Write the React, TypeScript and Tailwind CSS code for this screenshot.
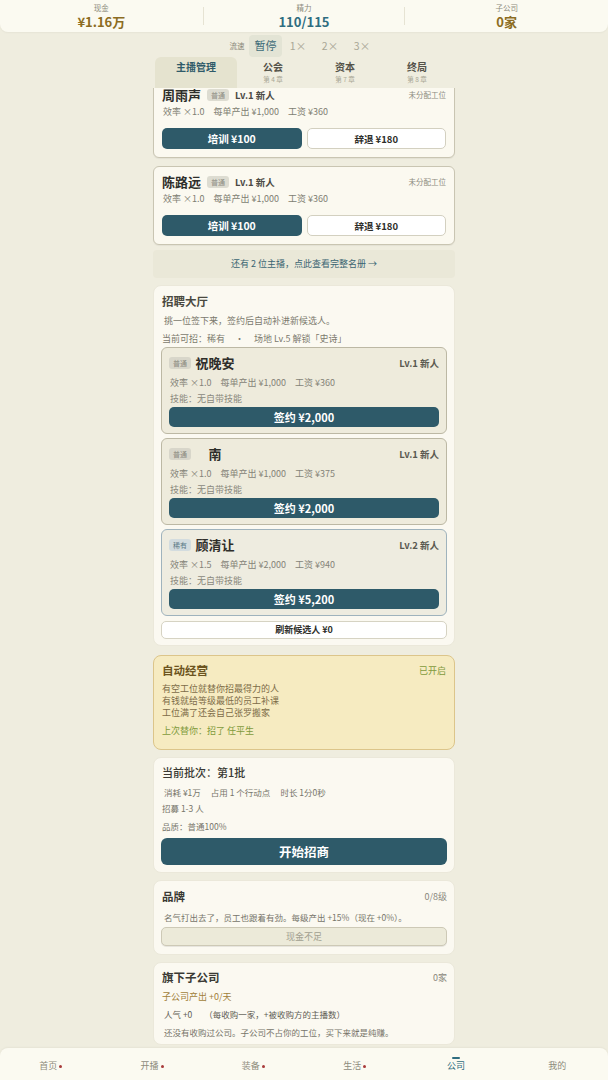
import React from "react";

const staff = [
  { name: "周雨声", salary: "¥360" },
  { name: "陈路远", salary: "¥360" },
];

const candidates = [
  { name: "祝晚安", tier: "普通", lv: "Lv.1 新人", eff: "×1.0", out: "¥1,000", pay: "¥360", price: "¥2,000", rare: false },
  { name: "南", tier: "普通", lv: "Lv.1 新人", eff: "×1.0", out: "¥1,000", pay: "¥375", price: "¥2,000", rare: false },
  { name: "顾清让", tier: "稀有", lv: "Lv.2 新人", eff: "×1.5", out: "¥2,000", pay: "¥940", price: "¥5,200", rare: true },
];

const navItems = [
  { label: "首页", dot: true },
  { label: "开播", dot: true },
  { label: "装备", dot: true },
  { label: "生活", dot: true },
  { label: "公司", dot: false, active: true },
  { label: "我的", dot: false },
];

function Stat({ label, value, color }: { label: string; value: string; color: string }) {
  return (
    <div className="flex flex-col items-center justify-center">
      <span className="text-[7.5px] leading-[10px] text-[#8d8b7c]">{label}</span>
      <span className={`text-[13px] leading-[17px] font-bold ${color}`}>{value}</span>
    </div>
  );
}

function StaffCard({ name, salary }: { name: string; salary: string }) {
  return (
    <div className="rounded-[6px] border border-[#c9c5b2] bg-[#fbf9f0] px-2 pt-[6px] pb-2 shadow-[0_1px_1px_rgba(0,0,0,0.05)]">
      <div className="flex h-[18px] items-center justify-between">
        <div className="flex items-center gap-[6px]">
          <span className="text-[13px] leading-[18px] font-bold text-[#2e2e2a]">{name}</span>
          <span className="rounded-[3px] bg-[#dddcd1] px-[4px] text-[7px] leading-[12px] text-[#8e8d84]">普通</span>
          <span className="text-[9.5px] leading-[14px] font-bold text-[#4b4a44]">Lv.1 新人</span>
        </div>
        <span className="text-[7.5px] leading-[10px] text-[#8d8b7f]">未分配工位</span>
      </div>
      <div className="mt-px flex h-[14px] items-center gap-[9px] pl-px text-[9px] leading-[14px] text-[#807e72]">
        <span>效率 ×1.0</span>
        <span>每单产出 ¥1,000</span>
        <span>工资 {salary}</span>
      </div>
      <div className="mt-[9px] grid grid-cols-2 gap-[5px]">
        <button className="h-[21px] rounded-[5px] bg-[#2e5a69] text-[10.5px] leading-[14px] font-bold text-white">培训 ¥100</button>
        <button className="h-[21px] rounded-[5px] border border-[#d3d0c0] bg-white text-[9.5px] leading-[14px] font-bold text-[#2e2e2a]">辞退 ¥180</button>
      </div>
    </div>
  );
}

function CandidateCard(c: (typeof candidates)[number]) {
  return (
    <div
      className={
        c.rare
          ? "rounded-[6px] border border-[#9fb3bd] bg-[#eeece0] px-[7px] pt-[6px] pb-[6px]"
          : "rounded-[6px] border border-[#bcb8a4] bg-[#eeebdc] px-[7px] pt-[6px] pb-[6px]"
      }
    >
      <div className="flex h-[18px] items-center justify-between">
        <div className="flex items-center gap-[4px]">
          <span
            className={
              c.rare
                ? "rounded-[3px] bg-[#d3dcdf] px-[4px] text-[7px] leading-[12px] text-[#5b7a86]"
                : "rounded-[3px] bg-[#d8d6ca] px-[4px] text-[7px] leading-[12px] text-[#8b8a80]"
            }
          >
            {c.tier}
          </span>
          <span className="min-w-[40px] text-center text-[13px] leading-[18px] font-bold text-[#2e2e2a]">{c.name}</span>
        </div>
        <span className="text-[9.5px] leading-[14px] font-bold text-[#5a5950]">{c.lv}</span>
      </div>
      <div className="mt-[4px] flex h-[13px] items-center gap-[9px] pl-[1px] text-[9px] leading-[13px] text-[#858378]">
        <span>效率 {c.eff}</span>
        <span>每单产出 {c.out}</span>
        <span>工资 {c.pay}</span>
      </div>
      <div className="mt-[3px] h-[13px] pl-[1px] text-[9px] leading-[13px] text-[#8a887c]">技能：无自带技能</div>
      <button className="mt-[2px] block h-[20px] w-full rounded-[5px] bg-[#2e5a69] text-[11px] leading-[14px] font-bold text-white">
        签约 {c.price}
      </button>
    </div>
  );
}

export default function App() {
  return (
    <div className="flex h-[1080px] w-[608px] flex-col overflow-hidden bg-[#efeddf] font-['Noto_Sans_CJK_SC','Noto_Sans',sans-serif]">
      {/* 顶部资源栏 */}
      <div className="grid h-[32px] shrink-0 grid-cols-3 rounded-b-[8px] bg-[#fbfaf1] shadow-[0_1px_2px_rgba(0,0,0,0.04)]">
        <Stat label="现金" value="¥1.16万" color="text-[#8c6c22]" />
        <div className="my-[7px] flex items-center justify-center border-x border-[#e6e3d3]">
          <div className="-my-[7px] flex flex-col items-center">
            <span className="text-[7.5px] leading-[10px] text-[#8d8b7c]">精力</span>
            <span className="text-[13px] leading-[17px] font-bold text-[#2f6d80]">110/115</span>
          </div>
        </div>
        <Stat label="子公司" value="0家" color="text-[#8c6c22]" />
      </div>

      {/* 流速 */}
      <div className="mt-[2px] flex h-[23px] shrink-0 items-center pl-[229px]">
        <span className="mr-[4px] w-[16px] text-center text-[7.5px] text-[#8d8b7c]">流速</span>
        <span className="flex h-[22px] w-[33px] items-center justify-center rounded-[4px] bg-[#e3e4d5] text-[11px] text-[#3d6b78]">暂停</span>
        <span className="w-[32px] text-center text-[10.5px] text-[#a9a796]">1×</span>
        <span className="w-[32px] text-center text-[10.5px] text-[#a9a796]">2×</span>
        <span className="w-[32px] text-center text-[10.5px] text-[#a9a796]">3×</span>
      </div>

      {/* 章节标签 */}
      <div className="flex h-[31px] shrink-0 justify-center">
        <div className="flex w-[302px] pl-[2px]">
          <div className="flex w-[82px] flex-col items-center rounded-t-[6px] bg-[#e5e3cf] pt-[3px]">
            <span className="text-[10px] leading-[14px] font-bold text-[#2f5a69]">主播管理</span>
          </div>
          {[
            ["公会", "第 4 章"],
            ["资本", "第 7 章"],
            ["终局", "第 8 章"],
          ].map(([t, s]) => (
            <div key={t} className="flex w-[72px] flex-col items-center pt-[3px]">
              <span className="text-[10px] leading-[14px] font-bold text-[#55534a]">{t}</span>
              <span className="text-[6.5px] leading-[10px] text-[#a8a694]">{s}</span>
            </div>
          ))}
        </div>
      </div>

      {/* 滚动内容 */}
      <div className="flex-1 overflow-hidden">
        <div className="mx-auto -mt-[9px] flex w-[302px] flex-col">
          <div className="flex flex-col gap-[8px]">
            {staff.map((s) => (
              <StaffCard key={s.name} {...s} />
            ))}
          </div>

          <div className="mt-[5px] flex h-[28px] items-center justify-center rounded-[4px] bg-[#eae8d8] text-[9px] text-[#3a6572]">
            还有 2 位主播，点此查看完整名册 →
          </div>

          {/* 招聘大厅 */}
          <div className="mt-[7px] rounded-[8px] border border-[#ebe8da] bg-[#fbf9f1] px-[7px] pt-[7px] pb-[6px]">
            <div className="h-[16px] pl-[1px] text-[11.5px] leading-[16px] font-bold text-[#4a4940]">招聘大厅</div>
            <div className="mt-[5px] h-[14px] pl-[3px] text-[9px] leading-[14px] text-[#7c7a6e]">挑一位签下来，签约后自动补进新候选人。</div>
            <div className="mt-[4px] flex h-[14px] items-center pl-px text-[9px] leading-[14px] text-[#7c7a6e]">
              <span>当前可招：稀有</span>
              <span className="mx-[10px]">·</span>
              <span>场地 Lv.5 解锁「史诗」</span>
            </div>
            <div className="mt-px flex flex-col gap-[4px]">
              {candidates.map((c) => (
                <CandidateCard key={c.name} {...c} />
              ))}
            </div>
            <button className="mt-[5px] block h-[18px] w-full rounded-[5px] border border-[#d6d3c3] bg-white text-[9px] leading-[12px] font-bold text-[#2e2e2a]">
              刷新候选人 ¥0
            </button>
          </div>

          {/* 自动经营 */}
          <div className="mt-[9px] rounded-[8px] border border-[#dcc58a] bg-[#f6ebc1] px-[8px] pt-[6px] pb-[12px]">
            <div className="flex h-[17px] items-center justify-between">
              <span className="text-[11.5px] leading-[17px] font-bold text-[#6c5420]">自动经营</span>
              <span className="text-[9px] leading-[12px] text-[#7f9a3c]">已开启</span>
            </div>
            <div className="mt-[4px] flex flex-col text-[9px] leading-[12px] text-[#7d6c48]">
              <span>有空工位就替你招最得力的人</span>
              <span>有钱就给等级最低的员工补课</span>
              <span>工位满了还会自己张罗搬家</span>
            </div>
            <div className="mt-[6px] h-[12px] text-[9px] leading-[12px] text-[#7f9a3c]">上次替你：招了 任平生</div>
          </div>

          {/* 当前批次 */}
          <div className="mt-[7px] rounded-[8px] border border-[#ebe8da] bg-[#fbf9f1] px-[7px] pt-[6px] pb-[7px]">
            <div className="h-[17px] pl-[1px] text-[11px] leading-[17px] font-medium text-[#3a3934]">当前批次：第1批</div>
            <div className="mt-[5px] flex h-[12px] items-center gap-[10px] pl-[3px] text-[8.5px] leading-[12px] text-[#77756a]">
              <span>消耗 ¥1万</span>
              <span>占用 1 个行动点</span>
              <span>时长 1分0秒</span>
            </div>
            <div className="mt-[4px] h-[12px] pl-px text-[8.5px] leading-[12px] text-[#77756a]">招募 1-3 人</div>
            <div className="mt-[6px] h-[12px] pl-px text-[8.5px] leading-[12px] text-[#77756a]">品质：普通100%</div>
            <button className="mt-[6px] block h-[27px] w-full rounded-[6px] bg-[#2e5a69] text-[12.5px] leading-[17px] font-bold text-white">开始招商</button>
          </div>

          {/* 品牌 */}
          <div className="mt-[7px] rounded-[8px] border border-[#ebe8da] bg-[#fbf9f1] px-[7px] pt-[7px] pb-[8px]">
            <div className="flex h-[17px] items-center justify-between pl-px">
              <span className="text-[11.5px] leading-[17px] font-bold text-[#3a3934]">品牌</span>
              <span className="text-[9px] leading-[12px] text-[#8a887c]">0/8级</span>
            </div>
            <div className="mt-[6px] h-[12px] pl-[3px] text-[8.5px] leading-[12px] text-[#77756a]">
              名气打出去了，员工也跟着有劲。每级产出 +15%（现在 +0%）。
            </div>
            <button className="mt-[4px] block h-[19px] w-full rounded-[5px] border border-[#cdc9b6] bg-[#ecead9] text-[9px] leading-[12px] text-[#a19f90] shadow-[0_1px_0_rgba(0,0,0,0.08)]">
              现金不足
            </button>
          </div>

          {/* 旗下子公司 */}
          <div className="mt-[7px] rounded-[8px] border border-[#ebe8da] bg-[#fbf9f1] px-[7px] pt-[6px] pb-[5px]">
            <div className="flex h-[17px] items-center justify-between pl-px">
              <span className="text-[11.5px] leading-[17px] font-bold text-[#3a3934]">旗下子公司</span>
              <span className="text-[9px] leading-[12px] text-[#8a887c]">0家</span>
            </div>
            <div className="mt-[4px] h-[13px] pl-px text-[9px] leading-[13px] text-[#a17f3a]">子公司产出 +0/天</div>
            <div className="mt-[5px] flex h-[13px] items-center gap-[12px] pl-[3px] text-[8.5px] leading-[13px] text-[#5f5d54]">
              <span>人气 +0</span>
              <span>（每收购一家，+被收购方的主播数）</span>
            </div>
            <div className="mt-[5px] h-[13px] pl-[3px] text-[8.5px] leading-[13px] text-[#77756a]">
              还没有收购过公司。子公司不占你的工位，买下来就是纯赚。
            </div>
          </div>
        </div>
      </div>

      {/* 底部导航 */}
      <div className="grid h-[32px] shrink-0 grid-cols-6 rounded-t-[8px] bg-[#fbfaf1] shadow-[0_-1px_2px_rgba(0,0,0,0.04)]">
        {navItems.map((n) => (
          <div key={n.label} className="relative flex items-center justify-center pt-[4px]">
            {n.active && <span className="absolute top-[9px] h-[1.5px] w-[8px] rounded bg-[#2f6d80]" />}
            <span className={n.active ? "text-[9px] leading-[12px] text-[#2f6d80]" : "text-[9px] leading-[12px] text-[#8d8b7c]"}>{n.label}</span>
            {n.dot && <span className="ml-[2px] h-[3px] w-[3px] rounded-full bg-[#a83a3a]" />}
          </div>
        ))}
      </div>
    </div>
  );
}
